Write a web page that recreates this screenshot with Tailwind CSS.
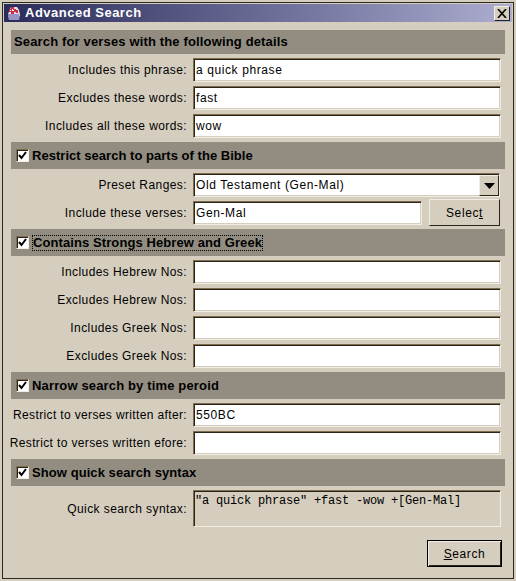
<!doctype html>
<html>
<head>
<meta charset="utf-8">
<script src="https://cdn.jsdelivr.net/npm/@tailwindcss/browser@4"></script>
</head>
<body class="m-0 bg-[#d5cebe]">
<div class="w-[516px] h-[581px] overflow-hidden border-2 border-t-[#d5cebe] border-l-[#d5cebe] border-r-[#d5cebe] border-b-[#d5cebe] font-['Liberation_Sans',sans-serif] text-[12px] tracking-[0.6px] text-black">
  <div class="h-[577px] flex flex-col bg-[#d5cebe] border border-[#2a2a22] p-[1px]">
    <!-- title bar -->
    <div class="h-[18px] shrink-0 flex items-center justify-between bg-gradient-to-r from-[#2c2c5a] to-[#adadd0] pl-[2px] pr-[2px]">
      <div class="flex items-center gap-[3px]">
        <svg width="16" height="16" viewBox="0 0 16 16">
          <path d="M2 9l3-7h6l2 3 1 5-1 5H3z" fill="#e8dce8"/>
          <path d="M5 2h3v2h2v3H8v2H5V7H3V4h2zM10 5h2v3h-2z" fill="#c8304a"/>
          <path d="M6 4h1v1h1v1H6zM4 5h1v1H4z" fill="#fff"/>
          <path d="M2 10h11M3 12h11M2 14h12" stroke="#4a4a9c" stroke-width="1"/>
        </svg>
        <span class="text-white font-bold text-[13px] tracking-[0.5px]">Advanced Search</span>
      </div>
      <div class="w-[16px] h-[15px] flex items-center justify-center bg-[#d5cebe] border border-t-[#f2efe6] border-l-[#f2efe6] border-r-[#222] border-b-[#222]">
        <svg width="10" height="9" viewBox="0 0 10 9"><path d="M1 0l8 9M9 0l-8 9" stroke="#000" stroke-width="1.6"/></svg>
      </div>
    </div>

    <div class="flex-1 flex flex-col pl-[7px] pr-[7px] pt-[8px]">
      <!-- details -->
      <div class="h-[24px] flex items-center bg-[#928d80] pl-[3px] font-bold text-[13px] tracking-[0.15px]">Search for verses with the following details</div>
      <div class="mt-[4px] mb-[4px] flex flex-col gap-[4px]">
        <div class="flex items-center h-[24px]"><span class="w-[176px] shrink-0 flex justify-end whitespace-nowrap tracking-[0.42px]">Includes this phrase:</span><div class="ml-[6px] w-[308px] h-[24px] bg-white border border-t-[#7f6c4e] border-l-[#7f6c4e] border-r-[#f0ede4] border-b-[#f0ede4] shadow-[inset_1px_1px_0_#2a2418,inset_-1px_-1px_0_#d5cebe] pl-[2px] flex items-center">a quick phrase</div></div>
        <div class="flex items-center h-[24px]"><span class="w-[176px] shrink-0 flex justify-end whitespace-nowrap tracking-[0.42px]">Excludes these words:</span><div class="ml-[6px] w-[308px] h-[24px] bg-white border border-t-[#7f6c4e] border-l-[#7f6c4e] border-r-[#f0ede4] border-b-[#f0ede4] shadow-[inset_1px_1px_0_#2a2418,inset_-1px_-1px_0_#d5cebe] pl-[2px] flex items-center">fast</div></div>
        <div class="flex items-center h-[24px]"><span class="w-[176px] shrink-0 flex justify-end whitespace-nowrap tracking-[0.42px]">Includes all these words:</span><div class="ml-[6px] w-[308px] h-[24px] bg-white border border-t-[#7f6c4e] border-l-[#7f6c4e] border-r-[#f0ede4] border-b-[#f0ede4] shadow-[inset_1px_1px_0_#2a2418,inset_-1px_-1px_0_#d5cebe] pl-[2px] flex items-center">wow</div></div>
      </div>

      <!-- bible parts -->
      <div class="h-[27px] flex items-center bg-[#928d80] pl-[5px] gap-[3px] font-bold text-[13px] tracking-[0.03px]">
        <div class="w-[13px] h-[13px] bg-white flex items-center justify-center border border-t-[#7f6c4e] border-l-[#7f6c4e] border-r-[#f0ede4] border-b-[#f0ede4] shadow-[inset_1px_1px_0_#2a2418]"><svg width="9" height="9" viewBox="0 0 9 9"><path d="M1 4l2.500 3L8 1" fill="none" stroke="#000" stroke-width="2"/></svg></div>
        <span>Restrict search to parts of the Bible</span>
      </div>
      <div class="mt-[4px] flex items-center h-[24px]"><span class="w-[176px] shrink-0 flex justify-end whitespace-nowrap tracking-[0.42px]">Preset Ranges:</span>
        <div class="ml-[6px] w-[307px] h-[24px] bg-white border border-t-[#7f6c4e] border-l-[#7f6c4e] border-r-[#f0ede4] border-b-[#f0ede4] shadow-[inset_1px_1px_0_#2a2418,inset_-1px_-1px_0_#d5cebe] pl-[2px] flex items-center justify-between">
          <span>Old Testament (Gen-Mal)</span>
          <div class="w-[20px] h-[21px] mt-[1px] flex items-center justify-center bg-[#d5cebe] border border-t-[#f0ede4] border-l-[#f0ede4] border-r-[#2a2418] border-b-[#2a2418]"><svg width="11" height="6" viewBox="0 0 11 6"><path d="M0 0h11L5.500 6z" fill="#000"/></svg></div>
        </div>
      </div>
      <div class="mt-[2px] mb-[3px] flex items-center h-[27px]"><span class="w-[176px] shrink-0 flex justify-end whitespace-nowrap tracking-[0.42px]">Include these verses:</span>
        <div class="ml-[6px] w-[229px] h-[24px] bg-white border border-t-[#7f6c4e] border-l-[#7f6c4e] border-r-[#f0ede4] border-b-[#f0ede4] shadow-[inset_1px_1px_0_#2a2418,inset_-1px_-1px_0_#d5cebe] pl-[2px] flex items-center">Gen-Mal</div>
        <div class="ml-[7px] w-[71px] h-[27px] flex items-center justify-center bg-[#d5cebe] border border-t-[#f0ede4] border-l-[#f0ede4] border-r-[#2a2418] border-b-[#2a2418]"><span>Selec<u>t</u></span></div>
      </div>

      <!-- strongs -->
      <div class="h-[27px] flex items-center bg-[#928d80] pl-[5px] gap-[3px] font-bold text-[13px] tracking-[0.09px]">
        <div class="w-[13px] h-[13px] bg-white flex items-center justify-center border border-t-[#7f6c4e] border-l-[#7f6c4e] border-r-[#f0ede4] border-b-[#f0ede4] shadow-[inset_1px_1px_0_#2a2418]"><svg width="9" height="9" viewBox="0 0 9 9"><path d="M1 4l2.500 3L8 1" fill="none" stroke="#000" stroke-width="2"/></svg></div>
        <span class="h-[16px] flex items-center border border-dotted border-black">Contains Strongs Hebrew and Greek</span>
      </div>
      <div class="mt-[4px] mb-[4px] flex flex-col gap-[4px]">
        <div class="flex items-center h-[24px]"><span class="w-[176px] shrink-0 flex justify-end whitespace-nowrap tracking-[0.42px]">Includes Hebrew Nos:</span><div class="ml-[6px] w-[308px] h-[24px] bg-white border border-t-[#7f6c4e] border-l-[#7f6c4e] border-r-[#f0ede4] border-b-[#f0ede4] shadow-[inset_1px_1px_0_#2a2418,inset_-1px_-1px_0_#d5cebe]"></div></div>
        <div class="flex items-center h-[24px]"><span class="w-[176px] shrink-0 flex justify-end whitespace-nowrap tracking-[0.42px]">Excludes Hebrew Nos:</span><div class="ml-[6px] w-[308px] h-[24px] bg-white border border-t-[#7f6c4e] border-l-[#7f6c4e] border-r-[#f0ede4] border-b-[#f0ede4] shadow-[inset_1px_1px_0_#2a2418,inset_-1px_-1px_0_#d5cebe]"></div></div>
        <div class="flex items-center h-[24px]"><span class="w-[176px] shrink-0 flex justify-end whitespace-nowrap tracking-[0.42px]">Includes Greek Nos:</span><div class="ml-[6px] w-[308px] h-[24px] bg-white border border-t-[#7f6c4e] border-l-[#7f6c4e] border-r-[#f0ede4] border-b-[#f0ede4] shadow-[inset_1px_1px_0_#2a2418,inset_-1px_-1px_0_#d5cebe]"></div></div>
        <div class="flex items-center h-[24px]"><span class="w-[176px] shrink-0 flex justify-end whitespace-nowrap tracking-[0.42px]">Excludes Greek Nos:</span><div class="ml-[6px] w-[308px] h-[24px] bg-white border border-t-[#7f6c4e] border-l-[#7f6c4e] border-r-[#f0ede4] border-b-[#f0ede4] shadow-[inset_1px_1px_0_#2a2418,inset_-1px_-1px_0_#d5cebe]"></div></div>
      </div>

      <!-- time -->
      <div class="h-[27px] flex items-center bg-[#928d80] pl-[5px] gap-[3px] font-bold text-[13px] tracking-[0.15px]">
        <div class="w-[13px] h-[13px] bg-white flex items-center justify-center border border-t-[#7f6c4e] border-l-[#7f6c4e] border-r-[#f0ede4] border-b-[#f0ede4] shadow-[inset_1px_1px_0_#2a2418]"><svg width="9" height="9" viewBox="0 0 9 9"><path d="M1 4l2.500 3L8 1" fill="none" stroke="#000" stroke-width="2"/></svg></div>
        <span>Narrow search by time peroid</span>
      </div>
      <div class="mt-[4px] mb-[4px] flex flex-col gap-[4px]">
        <div class="flex items-center h-[24px]"><span class="w-[176px] shrink-0 flex justify-end whitespace-nowrap tracking-[0.36px]">Restrict to verses written after:</span><div class="ml-[6px] w-[308px] h-[24px] bg-white border border-t-[#7f6c4e] border-l-[#7f6c4e] border-r-[#f0ede4] border-b-[#f0ede4] shadow-[inset_1px_1px_0_#2a2418,inset_-1px_-1px_0_#d5cebe] pl-[2px] flex items-center">550BC</div></div>
        <div class="flex items-center h-[24px]"><span class="w-[176px] shrink-0 flex justify-end whitespace-nowrap tracking-[0.36px]">Restrict to verses written efore:</span><div class="ml-[6px] w-[308px] h-[24px] bg-white border border-t-[#7f6c4e] border-l-[#7f6c4e] border-r-[#f0ede4] border-b-[#f0ede4] shadow-[inset_1px_1px_0_#2a2418,inset_-1px_-1px_0_#d5cebe]"></div></div>
      </div>

      <!-- syntax -->
      <div class="h-[27px] flex items-center bg-[#928d80] pl-[5px] gap-[3px] font-bold text-[13px] tracking-[0.07px]">
        <div class="w-[13px] h-[13px] bg-white flex items-center justify-center border border-t-[#7f6c4e] border-l-[#7f6c4e] border-r-[#f0ede4] border-b-[#f0ede4] shadow-[inset_1px_1px_0_#2a2418]"><svg width="9" height="9" viewBox="0 0 9 9"><path d="M1 4l2.500 3L8 1" fill="none" stroke="#000" stroke-width="2"/></svg></div>
        <span>Show quick search syntax</span>
      </div>
      <div class="mt-[4px] flex items-center h-[37px]"><span class="w-[176px] shrink-0 flex justify-end whitespace-nowrap tracking-[0.42px]">Quick search syntax:</span>
        <div class="ml-[6px] w-[308px] h-[37px] border border-t-[#7f6c4e] border-l-[#7f6c4e] border-r-[#f0ede4] border-b-[#f0ede4] shadow-[inset_1px_1px_0_#2a2418] pl-[1px] pt-[3px] font-['Liberation_Mono',monospace] tracking-[-0.2px] leading-[14px] whitespace-nowrap">"a quick phrase" +fast -wow +[Gen-Mal]</div>
      </div>
      <div class="mt-[13px] flex justify-end pr-[3px]">
        <div class="w-[75px] h-[27px] flex items-center justify-center border border-black shadow-[inset_1px_1px_0_#f0ede4,inset_-1px_-1px_0_#2a2418]"><span><u>S</u>earch</span></div>
      </div>
    </div>
  </div>
</div>
</body>
</html>
